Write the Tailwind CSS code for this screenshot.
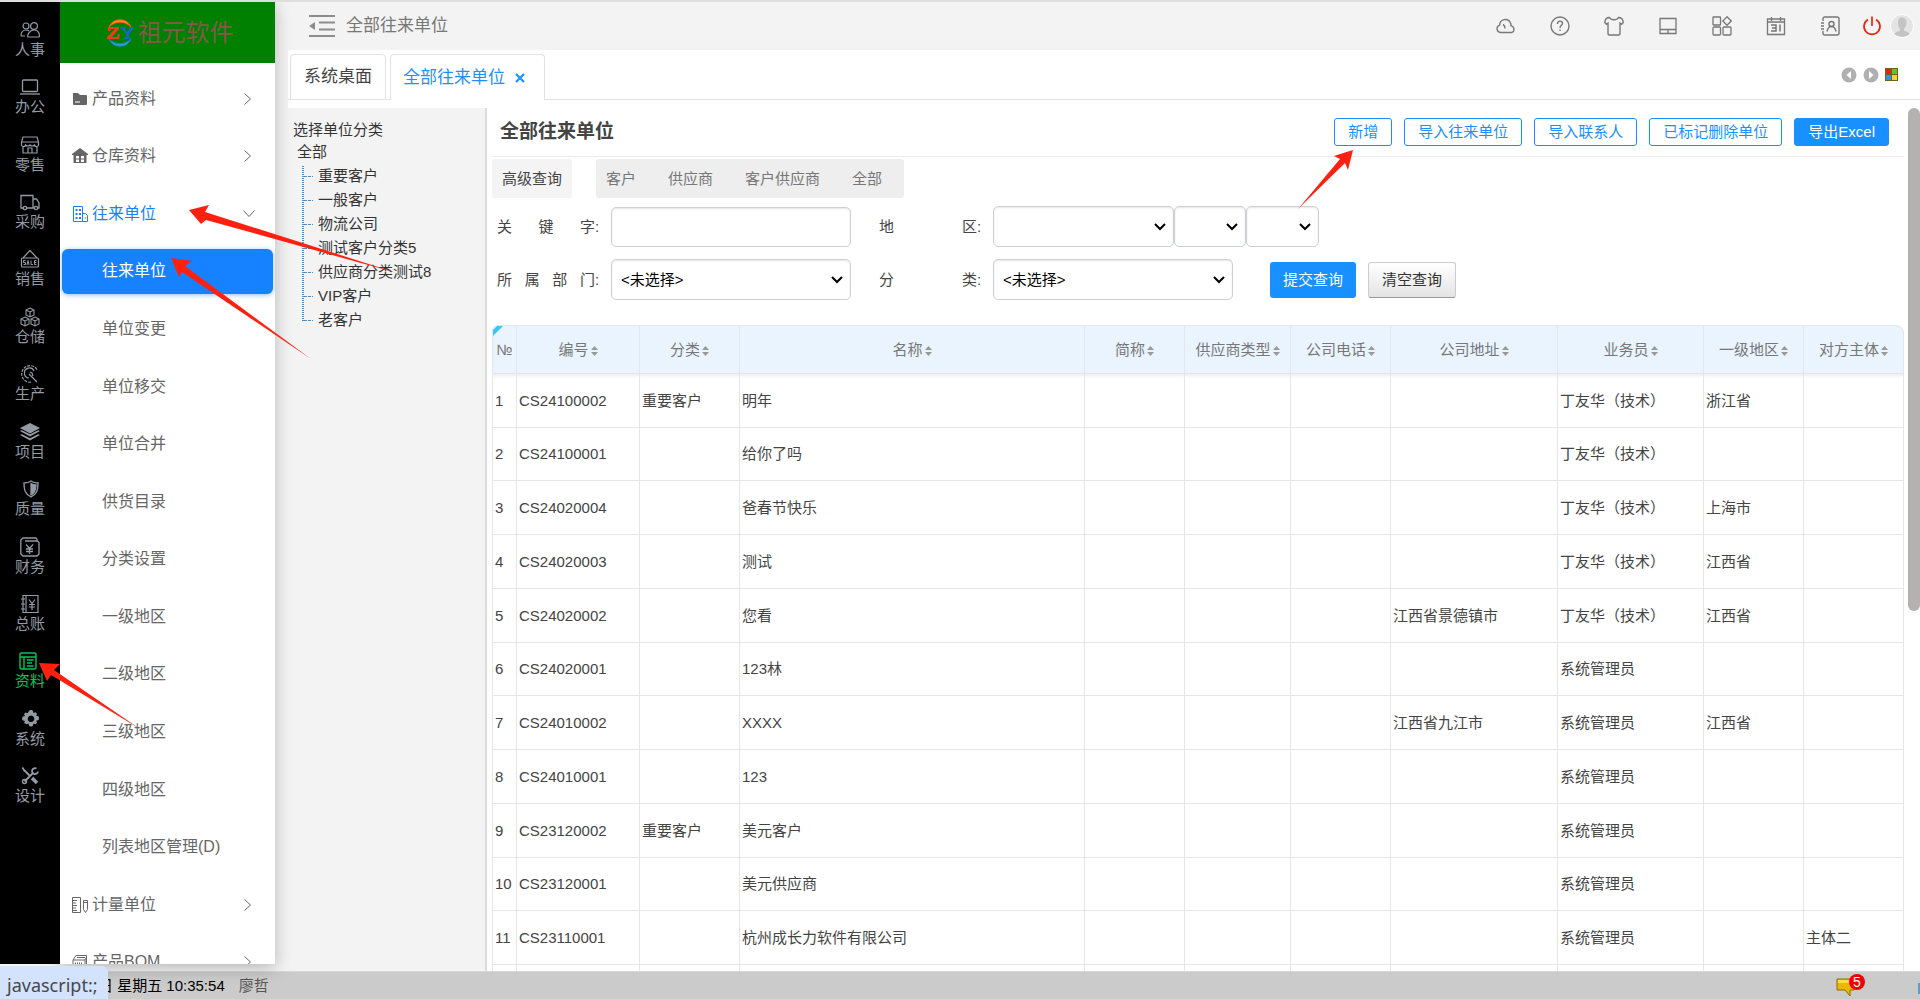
<!DOCTYPE html>
<html lang="zh-Hans">
<head>
    <meta charset="UTF-8">
    <meta name="viewport" content="width=device-width, initial-scale=1.0">
    <title>全部往来单位</title>
    <!-- 引入 Tailwind CSS -->
    <script src="https://cdn.jsdelivr.net/npm/@tailwindcss/browser@4"></script>
</head>
<body class="relative flex h-screen flex-col overflow-hidden border-t-2 border-[#dedede] bg-[#f3f3f3] font-['Liberation_Sans','Noto_Sans_CJK_SC',sans-serif] text-[15px] leading-5 text-[#444]">
    <div class="flex min-h-0 flex-1">
        <!-- 一级导航 -->
        <nav class="z-20 mb-[7px] w-[60px] shrink-0 overflow-hidden bg-black pt-[9px]">
            <ul class="grid h-[804px] auto-rows-fr text-[#949ba5] [&_a]:flex [&_a]:h-full [&_a]:flex-col [&_a]:items-center [&_a]:justify-center [&_svg]:size-5">
                <li><a href="#"><svg viewBox="0 0 20 20" fill="none" stroke="currentColor" stroke-width="1.2"><circle cx="6" cy="6" r="3"/><circle cx="14" cy="6" r="3.4"/><path d="M1 16c0-4 2-6 5-6 1.500 0 2.500.5 3 1M1 16h4M8 17c-1-1 1-7 6-7s6 5 5 7z"/></svg>人事</a></li>
                <li><a href="#"><svg viewBox="0 0 20 20" fill="none" stroke="currentColor" stroke-width="1.300"><rect x="2.500" y="3" width="15" height="11.500" rx="1"/><path d="M0 17h20"/></svg>办公</a></li>
                <li><a href="#"><svg viewBox="0 0 20 20" fill="none" stroke="currentColor" stroke-width="1.200"><path d="M3 2h14l1.500 5v2a2 2 0 0 1-4 1 3 3 0 0 1-4.500 0 3 3 0 0 1-4.500 0 2 2 0 0 1-4-1V7zM1.500 7h17M3 11v7h14v-7M8 18v-5h4v5"/></svg>零售</a></li>
                <li><a href="#"><svg viewBox="0 0 20 20" fill="none" stroke="currentColor" stroke-width="1.300"><path d="M3 16H1V3.500h12V16H7M13 7h3.500L19 11v5h-1.500M13 16h1"/><circle cx="5" cy="16" r="1.700"/><circle cx="16" cy="16" r="1.700"/></svg>采购</a></li>
                <li><a href="#"><svg viewBox="0 0 20 20" fill="none" stroke="currentColor" stroke-width="1.200"><path d="M10 1.500 3 9M10 1.500 17 9"/><rect x="1.500" y="9" width="17" height="9" rx="1"/><path stroke-width="1" d="M5.500 11.500h-2v2h2v2h-2M7 16l1-4.500L9 16M11 11.500v4h2M16.500 11.500h-2v4h2M14.500 13.500h2"/></svg>销售</a></li>
                <li><a href="#"><svg viewBox="0 0 20 20" fill="none" stroke="currentColor" stroke-width="1.100"><path d="m10 1 4 2v5l-4 2-4-2V3zM6 3l4 2 4-2M10 5v5M5 10l4 2v5l-4 2-4-2v-5zM1 12l4 2 4-2M5 14v5M15 10l4 2v5l-4 2-4-2v-5zM11 12l4 2 4-2M15 14v5"/></svg>仓储</a></li>
                <li><a href="#"><svg viewBox="0 0 20 20" fill="none" stroke="currentColor" stroke-width="1.200"><path stroke-dasharray="3 1" d="M17 5.500A8.300 8.300 0 1 0 12 18"/><path d="M14 7a5 5 0 1 0-5 7M9 10l8 8M10 8l2 1 1 3"/></svg>生产</a></li>
                <li><a href="#"><svg viewBox="0 0 20 20" fill="currentColor"><path d="m10 1 10 5-10 5.500L0 6zM0 9l2-.8 8 4 8-4 2 .8-10 5.500zM0 13l2-.8 8 4 8-4 2 .8-10 5.500z"/></svg>项目</a></li>
                <li><a href="#"><svg viewBox="0 0 20 20" fill="none" stroke="currentColor" stroke-width="1.300"><path d="M11 2c2 1.500 4 2 7 2 0 7-1 11-7 14-6-3-7-7-7-14 3 0 5-.5 7-2z"/><path fill="currentColor" d="M11 4.500c2 1 3 1.300 5 1.500-.2 5-1 8-5 10z"/></svg>质量</a></li>
                <li><a href="#"><svg viewBox="0 0 20 20" fill="none" stroke="currentColor" stroke-width="1.300"><path d="M17 4V2.500L16 1H3L.8 3v14L3 19h14l2-2V5.500L17.500 4H5M6 7.500l3.500 4 3.500-4M9.500 11.500V17M6 12h7M6 14.500h7"/></svg>财务</a></li>
                <li><a href="#"><svg viewBox="0 0 20 20" fill="none" stroke="currentColor" stroke-width="1.200"><path d="M3 1.500h15v17H3zM6 1.500v17M1 5h4M1 10h4M1 15h4M9 5.500l3 4 3-4M12 9.500V16M9 10.500h6M9 13h6"/></svg>总账</a></li>
                <li><a href="#" class="text-[#00c65e]"><svg class="mr-1" viewBox="0 0 20 20" fill="none" stroke="currentColor" stroke-width="1.400"><rect x="2" y="2" width="16" height="16" rx="1.500"/><path d="M2 6h16M6 6v12M9 9h6.500M9 12h5M9 15h6.500"/></svg>资料</a></li>
                <li><a href="#"><svg viewBox="0 0 20 20" fill="currentColor"><path fill-rule="evenodd" d="m9 2 1-1h2l1 1 .5 2 2-.8 1.500 1.500-.8 2 2 .6.8 1v2l-.8 1-2 .5.8 2-1.500 1.500-2-.8-.5 2-1 1h-2l-1-1-.5-2-2 .8L4 14l1-2-2-.6-.8-1v-2l.8-1L5 7l-1-2 1.500-1.500 2 .8zM11 6.500a3.300 3.300 0 1 0 .01 0z"/></svg>系统</a></li>
                <li><a href="#"><svg viewBox="0 0 20 20" fill="none" stroke="currentColor" stroke-width="1.800"><path d="M3 3l7 7M2 2l2 .5M4.500 15.500l9-9"/><circle cx="4.500" cy="15.500" r="2" stroke-width="1.400"/><path d="M16.500 2.500a3 3 0 1 0 1.500 3"/><path stroke-width="3.500" d="m12 12 5 5"/></svg>设计</a></li>
            </ul>
        </nav>

        <!-- 二级菜单 -->
        <aside class="z-10 mr-[13px] mb-[7px] flex w-[215px] shrink-0 flex-col overflow-hidden bg-white shadow-[0_4px_16px_rgba(0,0,0,0.25)]">
            <div class="flex h-[61px] shrink-0 items-center justify-center gap-1 bg-[green] pl-1 text-2xl text-[#805a48]">
                <svg class="h-8 w-7" viewBox="0 0 28 32">
                    <path d="M3 10A12 12 0 0 1 25 10 15 15 0 0 0 3 10z" fill="#f7941d" stroke="#f15a24"/>
                    <path d="M3 22a12 12 0 0 0 22 0 15 15 0 0 1-22 0z" fill="#29a3ea" stroke="#1b7fd0"/>
                    <path d="M2 10h11v2L6 20h5l1-3h2l-1 5H1v-2l8-8H5l-1 2H2z" fill="#f33a13"/>
                    <path d="M14 10h6v1l-1 1 2 3 3-3-1-1v-1h5v1l-1 1-4 5v3l2 1v1h-7v-1l2-1v-3l-4-5-2-1z" fill="#1268c4"/>
                </svg>
                祖元软件
            </div>
            <ul class="mt-[7px] grid h-[921px] shrink-0 auto-rows-fr text-base text-[#666] [&_a]:flex [&_a]:h-full [&_a]:items-center">
                <li><a href="#" class="gap-1 pr-6 pl-3"><svg class="size-4" viewBox="0 0 16 16" fill="currentColor"><path fill-rule="evenodd" d="M1 2h5l2 2h6q1 0 1 1v8q0 1-1 1H2q-1 0-1-1zM3 10.500v1h5v-1z"/></svg>产品资料<svg class="ml-auto h-3 w-[7px]" viewBox="0 0 7 12" fill="none" stroke="currentColor"><path d="m.5.5 6 5.500-6 5.500"/></svg></a></li>
                <li><a href="#" class="gap-1 pr-6 pl-3"><svg class="size-4" viewBox="0 0 16 16" fill="currentColor"><path fill-rule="evenodd" d="m8 0 8 6v1h-1.500v8h-13V7H0V6zM4 8v2.500h3V8zM9 8v2.500h3V8zM4 11.500V14h3v-2.500zM9 11.500V14h3v-2.500z"/></svg>仓库资料<svg class="ml-auto h-3 w-[7px]" viewBox="0 0 7 12" fill="none" stroke="currentColor"><path d="m.5.5 6 5.500-6 5.500"/></svg></a></li>
                <li><a href="#" class="gap-1 pr-5 pl-3 text-[#1682ff]"><svg class="size-4" viewBox="0 0 16 16" fill="none" stroke="currentColor"><path d="M1.500.5h9v15h-9zM10.500 7.500h3l2 2v6h-5M12.500 12h1.500" /><path stroke-width="2" stroke-dasharray="2 1.500" d="M3.500 4h6M3.500 8h6M3.500 12h6"/></svg>往来单位<svg class="ml-auto h-[7px] w-3 text-[#666]" viewBox="0 0 12 7" fill="none" stroke="currentColor"><path d="m.5.5 5.500 6 5.500-6"/></svg></a></li>
                <li class="px-0.5 py-1.5"><a href="#" class="rounded-md bg-[#1682ff] pl-10 text-white shadow-[0_1px_5px_rgba(22,130,255,0.5)]">往来单位</a></li>
                <li><a href="#" class="pl-[42px]">单位变更</a></li>
                <li><a href="#" class="pl-[42px]">单位移交</a></li>
                <li><a href="#" class="pl-[42px]">单位合并</a></li>
                <li><a href="#" class="pl-[42px]">供货目录</a></li>
                <li><a href="#" class="pl-[42px]">分类设置</a></li>
                <li><a href="#" class="pl-[42px]">一级地区</a></li>
                <li><a href="#" class="pl-[42px]">二级地区</a></li>
                <li><a href="#" class="pl-[42px]">三级地区</a></li>
                <li><a href="#" class="pl-[42px]">四级地区</a></li>
                <li><a href="#" class="pl-[42px]">列表地区管理(D)</a></li>
                <li><a href="#" class="gap-1 pr-6 pl-3"><svg class="size-4" viewBox="0 0 16 16" fill="none" stroke="currentColor"><path d="M.5.5h8v15h-8zM1 3.500h4M1 6h3M1 8.500h4M1 11h3M1 13.500h4M11.500 3.500h4v9l-2 3-2-3zM11.500 5.500h4"/></svg>计量单位<svg class="ml-auto h-3 w-[7px]" viewBox="0 0 7 12" fill="none" stroke="currentColor"><path d="m.5.5 6 5.500-6 5.500"/></svg></a></li>
                <li><a href="#" class="gap-1 pr-6 pl-3"><svg class="size-4" viewBox="0 0 16 16" fill="none" stroke="currentColor"><path d="m1 6 3-4.500h10.500V12L13 15.500H1zM1 6h12v9M13 6l1.500-3M5 3.500h8"/><path stroke-width="2" stroke-dasharray="1 1" d="M3 9.500h8"/></svg>产品BOM<svg class="ml-auto h-3 w-[7px]" viewBox="0 0 7 12" fill="none" stroke="currentColor"><path d="m.5.5 6 5.500-6 5.500"/></svg></a></li>
            </ul>
        </aside>

        <main class="flex min-w-0 flex-1 flex-col bg-white">
            <!-- 顶部栏 -->
            <header class="flex h-12 shrink-0 items-center bg-[#f3f3f3] pr-[6px] pl-[21px] text-[#777]">
                <svg class="h-[22px] w-[26px]" viewBox="0 0 26 22" fill="none" stroke="#8c8c8c" stroke-width="2"><path d="M0 1h26M10 7.500h16M10 14.500h16M0 21h26"/><path d="M6 7v8l-6-4z" fill="#8c8c8c" stroke="none"/></svg>
                <h2 class="ml-[11px] text-[17px]">全部往来单位</h2>
                <div class="ml-auto flex items-center gap-[34px]">
                    <button type="button" aria-label="云"><svg class="size-5" viewBox="0 0 20 20" fill="none" stroke="currentColor" stroke-width="1.400"><path d="M4.500 16.500a3.800 3.800 0 0 1-.8-7.400 5.600 5.600 0 0 1 10.800-2q.8 1 .3 2.500A3.700 3.700 0 0 1 16 16.500zM7 8.500q2 1 2 4"/></svg></button>
                    <button type="button" aria-label="帮助"><svg class="size-5" viewBox="0 0 20 20" fill="none" stroke="currentColor" stroke-width="1.400"><circle cx="10" cy="10" r="9"/><path d="M7.500 8c0-4 5-3.500 5-.7 0 2-2.500 2-2.500 4.700M10 13.500V15"/></svg></button>
                    <button type="button" aria-label="主题"><svg class="size-5" viewBox="1 0 20 20" fill="none" stroke="currentColor" stroke-width="1.400"><path d="M6.500 1.500C8 4.500 14 4.500 15.500 1.500c3 0 4.500 1.500 4.700 5l-1.500 1.700L17 7v10.500q0 1.500-1.500 1.500h-9Q5 19 5 17.500V7L3.300 8.200 1.800 6.500c.2-3.500 1.700-5 4.700-5z"/></svg></button>
                    <button type="button" aria-label="桌面"><svg class="size-5" viewBox="0 0 20 20" fill="none" stroke="currentColor" stroke-width="1.300"><path d="M2 2.500h16v15H2zM2 13.500h16M10 13.500v4"/></svg></button>
                    <button type="button" aria-label="应用"><svg class="size-5" viewBox="0 0 20 20" fill="none" stroke="currentColor" stroke-width="1.300"><rect x="1" y="1" width="7.500" height="8" rx=".5"/><path d="m15 .8 4.300 4.200L15 9.300 10.800 5z"/><rect x="1" y="11" width="7.500" height="8" rx="1"/><rect x="11" y="11" width="8" height="8" rx="1"/></svg></button>
                    <button type="button" aria-label="日历"><svg class="size-5" viewBox="0 0 20 20" fill="none" stroke="currentColor" stroke-width="1.300"><path d="M1.500 3h17v15.500h-17zM1.500 6h17M5.500 1v4M14.500 1v4"/><path stroke-width="1.500" d="M5 9h5v6H5M6 12h4M14 8.500v7"/></svg></button>
                    <button type="button" aria-label="通讯录"><svg class="size-5" viewBox="0 0 20 20" fill="none" stroke="currentColor" stroke-width="1.400"><path d="M3 5V3q0-2 2-2h12q2 0 2 2v14q0 2-2 2H5q-2 0-2-2v-2M1 7h3M1 10h3M1 13h3"/><circle cx="11.500" cy="8" r="2.500"/><path d="M7 15.500q1-5 4.500-5t4.500 5"/></svg></button>
                </div>
                <button type="button" class="ml-[22px] text-[#e8260f]" aria-label="退出"><svg class="size-5" viewBox="0 0 20 20" fill="none" stroke="currentColor" stroke-width="1.700"><path d="M6 3.500a8 8 0 1 0 8 0M10 .5V10"/></svg></button>
                <button type="button" class="ml-2" aria-label="用户"><svg class="size-6" viewBox="0 0 24 24"><circle cx="12" cy="12" r="11.500" fill="#e4e4e4" stroke="#fff"/><path d="M8 8q0-4.500 4-4.500T16.500 8q0 5-2.500 6.500v2q4 1 6 3.500-8 6-16 0 2-2.500 6-3.500v-2Q8 13 8 8z" fill="#c4c4c4"/></svg></button>
            </header>

            <!-- 页签 -->
            <div class="flex h-[50px] shrink-0 items-stretch pt-1 text-[17px]">
                <div class="w-0.5 border-b border-[#e2e2e2]"></div>
                <button type="button" class="rounded-t border border-[#e2e2e2] px-[13px] text-[#444]">系统桌面</button>
                <div class="w-1 border-b border-[#e2e2e2]"></div>
                <button type="button" class="flex items-center rounded-t border border-b-0 border-[#e2e2e2] pr-[19px] pl-3 text-[#1e90ff]">全部往来单位<svg class="ml-[10px] size-[10px]" viewBox="0 0 10 10" stroke="currentColor" stroke-width="2.200"><path d="m1 1 8 8M9 1 1 9"/></svg></button>
                <div class="flex flex-1 items-center justify-end gap-[6px] border-b border-[#e2e2e2] pr-[22px] pb-1">
                    <button type="button" aria-label="向左"><svg class="size-4" viewBox="0 0 16 16"><circle cx="8" cy="8" r="7.500" fill="#b0b0b0"/><path d="M10 4v8L5.500 8z" fill="#fff"/></svg></button>
                    <button type="button" aria-label="向右"><svg class="size-4" viewBox="0 0 16 16"><circle cx="8" cy="8" r="7.500" fill="#b0b0b0"/><path d="M6 4v8l4.500-4z" fill="#fff"/></svg></button>
                    <button type="button" aria-label="窗口"><svg class="size-[13px]" viewBox="0 0 13 13"><path d="M0 0h13v13H0z" fill="#746214"/><path d="M1 1h5v5H1z" fill="#f01c1c"/><path d="M7 1h5v5H7z" fill="#4fce2b"/><path d="M1 7h5v5H1z" fill="#2795f5"/><path d="M7 7h5v5H7z" fill="#ffd22e"/></svg></button>
                </div>
            </div>

            <div class="mt-2 flex min-h-0 flex-1">
                <!-- 单位分类 -->
                <section class="w-[199px] shrink-0 border-r-2 border-[#dcdcdc] bg-[#f3f3f3] pt-[11px] pl-[5px] text-[#333]">
                    <h3 class="leading-[22px]">选择单位分类</h3>
                    <a href="#" class="block pl-1 leading-[22px]">全部</a>
                    <div class="mt-px flex gap-[5px] pl-2">
                        <svg class="h-[168px] w-3" viewBox="0 0 12 168" fill="none" stroke="#4a8cc4"><path stroke-width="2" stroke-dasharray="1 1" d="M2 2v155"/><path stroke-dasharray="3 1" d="M3 12.500h9M3 36.500h9M3 60.500h9M3 84.500h9M3 108.500h9M3 132.500h9M3 156.500h9"/></svg>
                        <ul class="leading-6">
                            <li><a href="#">重要客户</a></li>
                            <li><a href="#">一般客户</a></li>
                            <li><a href="#">物流公司</a></li>
                            <li><a href="#">测试客户分类5</a></li>
                            <li><a href="#">供应商分类测试8</a></li>
                            <li><a href="#">VIP客户</a></li>
                            <li><a href="#">老客户</a></li>
                        </ul>
                    </div>
                </section>

                <section class="min-w-0 flex-1 overflow-hidden pr-1 pl-[5px]">
                    <div class="flex h-[49px] items-center border-b border-[#ebebeb] pr-[15px] pl-2">
                        <h1 class="text-[19px] font-bold">全部往来单位</h1>
                        <div class="ml-auto flex gap-3 text-[#1890ff] [&_button]:h-7 [&_button]:rounded-[3px] [&_button]:border [&_button]:border-[#1890ff] [&_button]:px-[13px]">
                            <button type="button">新增</button>
                            <button type="button">导入往来单位</button>
                            <button type="button">导入联系人</button>
                            <button type="button">已标记删除单位</button>
                            <button type="button" class="bg-[#1890ff] text-white">导出Excel</button>
                        </div>
                    </div>

                    <!-- 查询条件 -->
                    <div class="mt-0.5 flex gap-6">
                        <button type="button" class="h-[39px] w-20 rounded-[3px] bg-[#f4f4f4]">高级查询</button>
                        <div class="flex h-[39px] items-center gap-8 rounded-[3px] bg-[#eee] pr-[22px] pl-[10px] text-[#777]">
                            <button type="button">客户</button>
                            <button type="button">供应商</button>
                            <button type="button">客户供应商</button>
                            <button type="button">全部</button>
                        </div>
                    </div>
                    <form class="mt-2 space-y-3 pl-[5px] [&_label]:flex [&_label]:w-[114px] [&_label_span]:w-[98px] [&_label_span]:[text-align-last:justify] [&_select]:h-[41px] [&_select]:w-full [&_select]:appearance-none [&_select]:rounded-[5px] [&_select]:border [&_select]:border-[#ced0d8] [&_select]:bg-white [&_select]:px-[9px] [&_select]:text-black [&_select]:shadow-[inset_0_1px_2px_rgba(0,0,0,0.1)]">
                        <div class="flex items-center">
                            <label for="keyword"><span>关键字</span>:</label>
                            <input id="keyword" type="text" class="h-10 w-60 rounded-[5px] border border-[#ced0d8] px-2 shadow-[inset_0_1px_2px_rgba(0,0,0,0.1)]">
                            <label for="area" class="ml-7"><span>地区</span>:</label>
                            <div class="relative w-[181px]">
                                <select id="area"><option></option></select>
                                <svg class="pointer-events-none absolute top-[17px] right-2 h-2 w-3" viewBox="0 0 12 8" fill="none" stroke="#000" stroke-width="2"><path d="m1 1 5 5 5-5"/></svg>
                            </div>
                            <div class="relative w-[72px]">
                                <select aria-label="二级地区"><option></option></select>
                                <svg class="pointer-events-none absolute top-[17px] right-2 h-2 w-3" viewBox="0 0 12 8" fill="none" stroke="#000" stroke-width="2"><path d="m1 1 5 5 5-5"/></svg>
                            </div>
                            <div class="relative w-[73px]">
                                <select aria-label="三级地区"><option></option></select>
                                <svg class="pointer-events-none absolute top-[17px] right-2 h-2 w-3" viewBox="0 0 12 8" fill="none" stroke="#000" stroke-width="2"><path d="m1 1 5 5 5-5"/></svg>
                            </div>
                        </div>
                        <div class="flex items-center">
                            <label for="dept"><span>所属部门</span>:</label>
                            <div class="relative w-60">
                                <select id="dept"><option>&lt;未选择&gt;</option></select>
                                <svg class="pointer-events-none absolute top-[17px] right-2 h-2 w-3" viewBox="0 0 12 8" fill="none" stroke="#000" stroke-width="2"><path d="m1 1 5 5 5-5"/></svg>
                            </div>
                            <label for="category" class="ml-7"><span>分类</span>:</label>
                            <div class="relative w-60">
                                <select id="category"><option>&lt;未选择&gt;</option></select>
                                <svg class="pointer-events-none absolute top-[17px] right-2 h-2 w-3" viewBox="0 0 12 8" fill="none" stroke="#000" stroke-width="2"><path d="m1 1 5 5 5-5"/></svg>
                            </div>
                            <button type="button" class="ml-[37px] h-9 rounded-[3px] bg-[#1890ff] px-[13px] text-white">提交查询</button>
                            <button type="reset" class="ml-3 h-9 rounded-[3px] border border-[#ccc] border-b-[#999] bg-linear-to-b from-white to-[#e4e4e4] px-[13px] text-[#333]">清空查询</button>
                        </div>
                    </form>

                    <!-- 列表 -->
                    <div class="relative mt-[25px]">
                        <table class="w-full table-fixed border-separate border-spacing-0 text-left [&_td]:border-r [&_td]:border-b [&_td]:border-[#e6e6e6] [&_td]:pl-0.5 [&_td]:whitespace-nowrap [&_td:first-child]:border-l [&_th]:border-y [&_th]:border-r [&_th]:border-[#e3e6ea] [&_th]:bg-[#e9f4ff] [&_th]:text-center [&_th]:font-normal [&_th]:whitespace-nowrap">
                            <colgroup>
                                <col class="w-[25px]"><col class="w-[123px]"><col class="w-[100px]"><col><col class="w-[100px]"><col class="w-[106px]"><col class="w-[100px]"><col class="w-[167px]"><col class="w-[146px]"><col class="w-[100px]"><col class="w-[100px]">
                            </colgroup>
                            <thead class="text-[#777]">
                                <tr id="list-header" class="h-[49px] [&_th:first-child]:rounded-tl-md [&_th:first-child]:border-l [&_th:last-child]:rounded-tr-lg"></tr>
                            </thead>
                            <tbody id="list-body" class="[&_tr]:h-[54px] [&_tr:first-child_td]:shadow-[inset_0_5px_5px_-4px_rgba(0,0,0,0.1)] [&_tr:nth-child(4n+2)]:h-[53px]"></tbody>
                        </table>
                        <svg class="absolute top-px left-px size-[10px]" viewBox="0 0 10 10"><path d="M4 0h6L0 10V4z" fill="#38c6fb"/></svg>
                    </div>
                </section>
                <!-- 滚动条 -->
                <div class="w-3 shrink-0"><div class="h-[503px] rounded-full bg-[#b5b1b1]"></div></div>
            </div>
        </main>
    </div>

    <!-- 状态栏 -->
    <footer class="relative flex h-7 shrink-0 items-center border-t border-[#d8d8d8] bg-[#cbcbcb] pr-16 pl-[98px] text-black">
        <span>日 星期五 10:35:54</span>
        <span class="ml-[14px] text-[#555]">廖哲</span>
        <button type="button" class="relative ml-auto h-6 w-5" aria-label="消息">
            <svg class="h-6 w-5" viewBox="0 0 20 24"><path d="M1 5h17v11h-4v6l-5-6H1z" fill="#eab800" stroke="#93690a"/><path d="M2 6h14v3H2z" fill="#ffdc4a"/></svg>
            <span class="absolute top-0 left-[13px] size-4 rounded-full bg-[#f00000] text-sm leading-4 text-white">5</span>
        </button>
        <span class="absolute right-0 bottom-[5px] h-[11px] w-0.5 bg-[#5a9fd0]"></span>
    </footer>
    <div class="absolute bottom-0 left-0 z-30 h-[33px] rounded-tr-md bg-[#d3e3fd] pr-[10px] pl-[7px] font-['Noto_Sans','Noto_Sans_CJK_SC',sans-serif] text-lg leading-[38px] text-[#474747]">javascript:;</div>

    <!-- 操作指引箭头 -->
    <svg class="pointer-events-none absolute top-[-2px] left-0 z-40 h-[740px] w-[1400px]" viewBox="0 0 1400 740" fill="#ff2010">
        <path d="m189 210 20-5-4 7 192 61-191-53-5 4z"/>
        <path d="m171 258 21 3-7 5 126 93-129-87-3 5z"/>
        <path d="m39 663 21 1-6 6 86 59-89-54-4 6z"/>
        <path d="m1353 150-19 6 6 3-42 50 47-46 3 7z"/>
    </svg>

    <script>
        const columns = ['编号', '分类', '名称', '简称', '供应商类型', '公司电话', '公司地址', '业务员', '一级地区', '对方主体'];
        const sortIcon = '<svg class="ml-0.5 inline h-[10px] w-[7px]" viewBox="0 0 7 10" fill="#999"><path d="M3.500 0 7 4H0zM3.500 10 0 6h7z"/></svg>';

        const rows = [
            ['CS24100002', '重要客户', '明年', '', '', '', '', '丁友华（技术）', '浙江省', ''],
            ['CS24100001', '', '给你了吗', '', '', '', '', '丁友华（技术）', '', ''],
            ['CS24020004', '', '爸春节快乐', '', '', '', '', '丁友华（技术）', '上海市', ''],
            ['CS24020003', '', '测试', '', '', '', '', '丁友华（技术）', '江西省', ''],
            ['CS24020002', '', '您看', '', '', '', '江西省景德镇市', '丁友华（技术）', '江西省', ''],
            ['CS24020001', '', '123林', '', '', '', '', '系统管理员', '', ''],
            ['CS24010002', '', 'XXXX', '', '', '', '江西省九江市', '系统管理员', '江西省', ''],
            ['CS24010001', '', '123', '', '', '', '', '系统管理员', '', ''],
            ['CS23120002', '重要客户', '美元客户', '', '', '', '', '系统管理员', '', ''],
            ['CS23120001', '', '美元供应商', '', '', '', '', '系统管理员', '', ''],
            ['CS23110001', '', '杭州成长力软件有限公司', '', '', '', '', '系统管理员', '', '主体二'],
            ['', '', '', '', '', '', '', '', '', '']
        ];

        document.getElementById('list-header').innerHTML =
            '<th>№</th>' + columns.map(c => `<th>${c}${sortIcon}</th>`).join('');

        document.getElementById('list-body').innerHTML = rows.map((r, i) =>
            `<tr><td>${r[0] ? i + 1 : ''}</td>${r.map(v => `<td>${v}</td>`).join('')}</tr>`
        ).join('');
    </script>
</body>
</html>
